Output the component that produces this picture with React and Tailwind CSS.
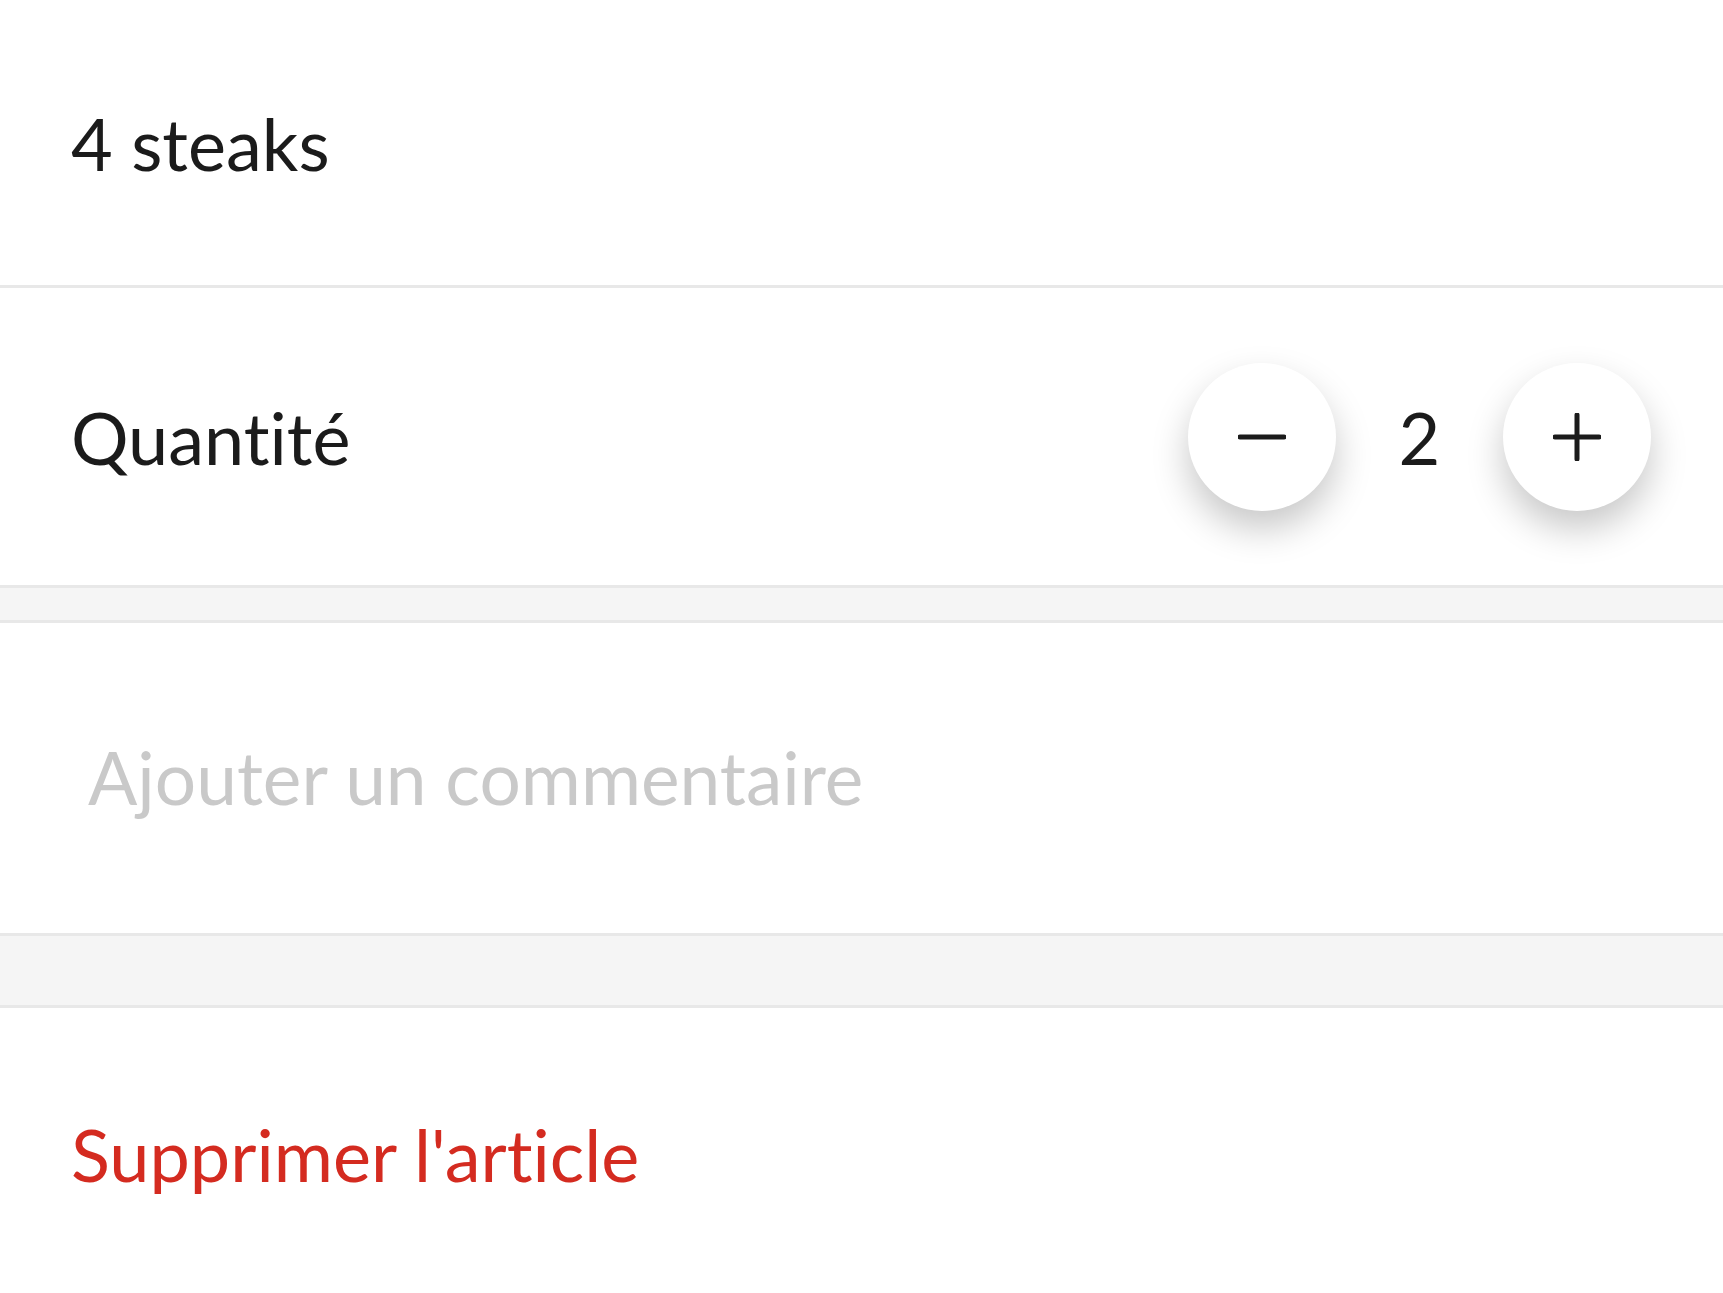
// App.jsx
import React, { useState } from 'react';

const font = { fontFamily: 'Lato, "Open Sans", sans-serif' };

const RoundButton = ({ children, onClick, label }) => (
  <button
    type="button"
    aria-label={label}
    onClick={onClick}
    className="w-[148px] h-[148px] rounded-full bg-white flex items-center justify-center shadow-[0_18px_36px_rgba(0,0,0,0.22)]"
  >
    {children}
  </button>
);

const App = () => {
  const [quantity, setQuantity] = useState(2);
  const [comment, setComment] = useState('');

  return (
    <div className="w-full min-h-screen bg-white text-[#1b1b1b] text-[72px] [font-variant-ligatures:none]" style={font}>
      {/* Product name */}
      <div className="h-[288px] flex items-center px-[71px] border-b-[3px] border-[#e8e8e8]">
        <span>4 steaks</span>
      </div>

      {/* Quantity */}
      <div className="h-[297px] flex items-center justify-between pl-[71px] pr-[72px]">
        <span>Quantité</span>
        <div className="flex items-center">
          <RoundButton label="Diminuer" onClick={() => setQuantity(q => Math.max(1, q - 1))}>
            <svg width="48" height="48" viewBox="0 0 48 48" fill="none" stroke="#1b1b1b" strokeWidth="5" strokeLinecap="round">
              <line x1="2" y1="24" x2="46" y2="24" />
            </svg>
          </RoundButton>
          <span className="w-[167px] text-center">{quantity}</span>
          <RoundButton label="Augmenter" onClick={() => setQuantity(q => q + 1)}>
            <svg width="48" height="48" viewBox="0 0 48 48" fill="none" stroke="#1b1b1b" strokeWidth="5" strokeLinecap="round">
              <line x1="2" y1="24" x2="46" y2="24" />
              <line x1="24" y1="2" x2="24" y2="46" />
            </svg>
          </RoundButton>
        </div>
      </div>

      <div className="h-[38px] bg-[#f5f5f5] border-y-[3px] border-[#e8e8e8]" />

      {/* Comment */}
      <div className="h-[310px] flex items-center pl-[88px] pr-[72px]">
        <input
          value={comment}
          onChange={e => setComment(e.target.value)}
          placeholder="Ajouter un commentaire"
          className="w-full bg-transparent outline-none text-[73px] text-[#1b1b1b] placeholder:text-[#c9c9c9] [font-variant-ligatures:none]"
          style={font}
        />
      </div>

      <div className="h-[75px] bg-[#f5f5f5] border-y-[3px] border-[#e8e8e8]" />

      {/* Delete */}
      <div className="h-[292px] flex items-center px-[71px]">
        <button type="button" className="text-[#d42b20] [font-variant-ligatures:none]">Supprimer l'article</button>
      </div>
    </div>
  );
};

export default App;
